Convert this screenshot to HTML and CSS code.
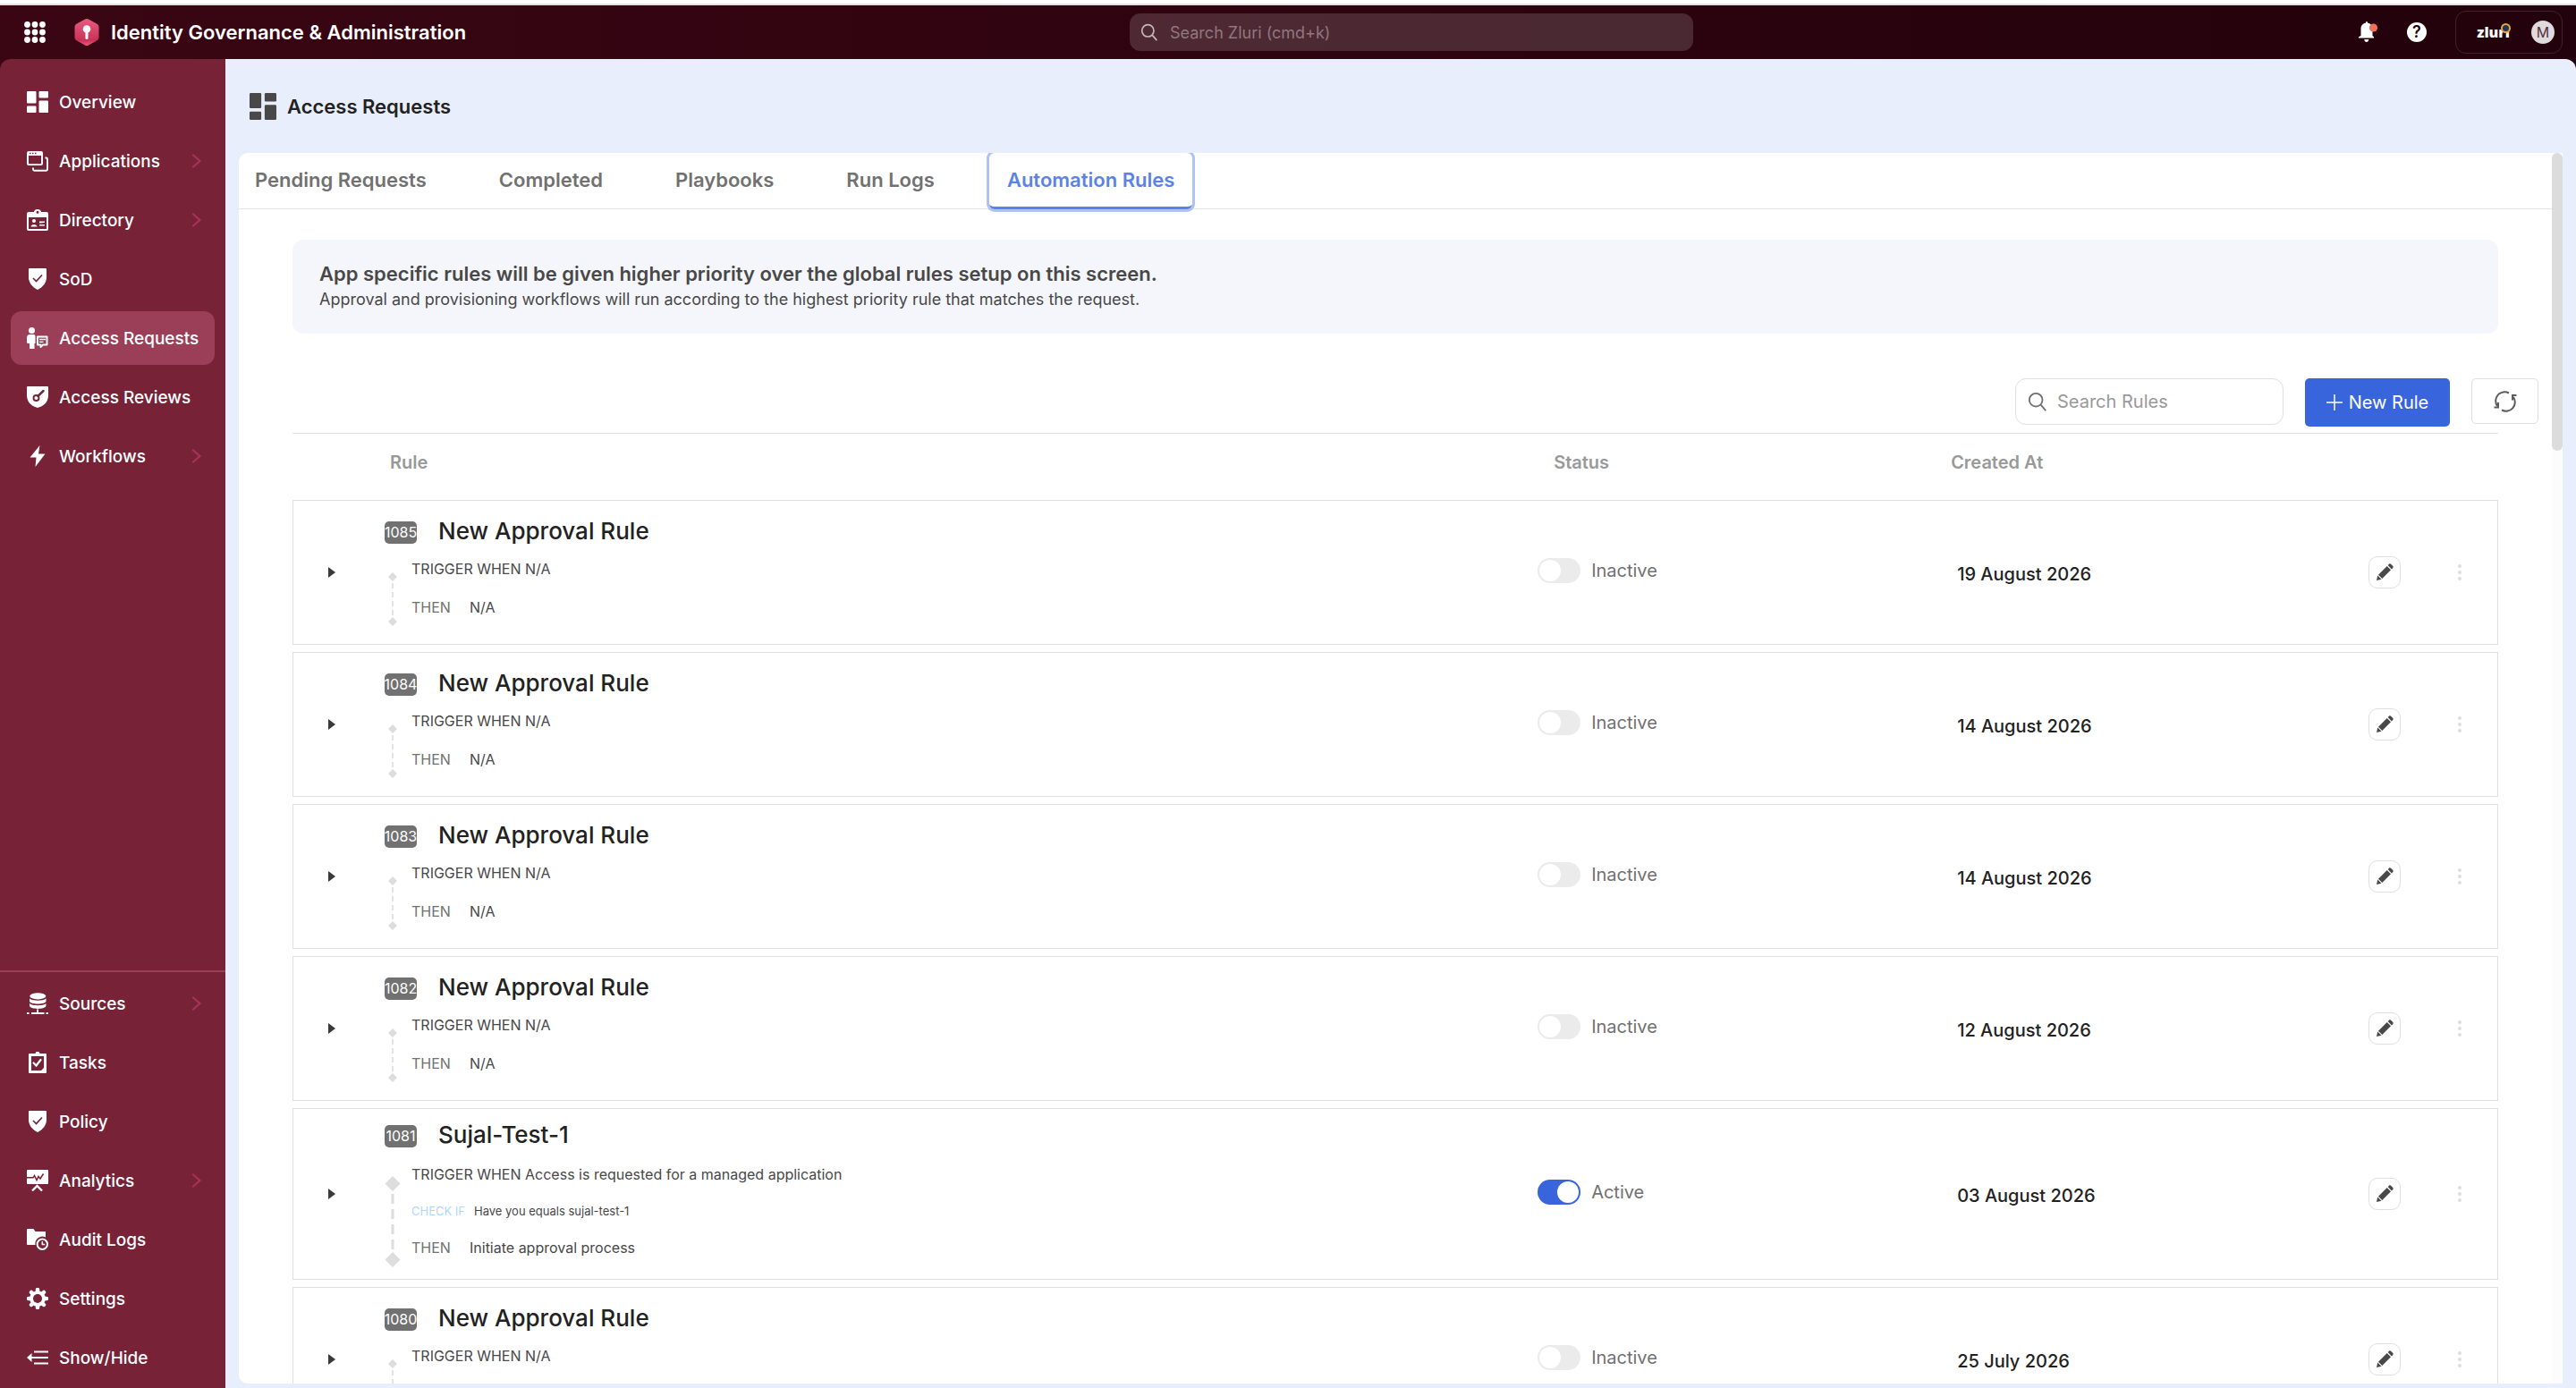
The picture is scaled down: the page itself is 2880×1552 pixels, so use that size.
FILE: index.html
```html
<!DOCTYPE html>
<html lang="en">

<head>
    <meta charset="UTF-8">
    <meta name="viewport" content="width=device-width, initial-scale=1.0">
    <title>Access Requests</title>
    <link rel="stylesheet" href="styles.css">
</head>

<body>
    <!-- Shared icons -->
    <svg class="sprite" aria-hidden="true">
        <symbol id="i-dashboard" viewBox="0 0 24 24">
            <rect x="0" y="0" width="10.5" height="13.5" rx="1" />
            <rect x="0" y="16.500" width="10.500" height="7.500" rx="1" />
            <rect x="13.500" y="0" width="10.500" height="7.500" rx="1" />
            <rect x="13.500" y="10.500" width="10.500" height="13.500" rx="1" />
        </symbol>
        <symbol id="i-apps" viewBox="0 0 24 24">
            <path fill-rule="evenodd" d="M2 1h14a2 2 0 0 1 2 2v12a2 2 0 0 1-2 2H2a2 2 0 0 1-2-2V3a2 2 0 0 1 2-2zm0 5v8.500a.8.800 0 0 0 .8.800h12.400a.8.800 0 0 0 .8-.8V6z" />
            <path d="M3 3.500h1.500M6 3.500h1.500M9 3.500h1.500" stroke="#772237" stroke-width="1.300" />
            <path d="M20.500 8.500h1a1.500 1.500 0 0 1 1.500 1.500v11a1.800 1.800 0 0 1-1.800 1.800H8.500A1.500 1.500 0 0 1 7 21.300V19.500" fill="none" stroke="currentColor" stroke-width="1.900" />
        </symbol>
        <symbol id="i-directory" viewBox="0 0 24 24">
            <path fill-rule="evenodd" d="M2 3h6V2.500A3.500 3.500 0 0 1 11.500 0h1A3.500 3.500 0 0 1 16 2.500V3h6a2 2 0 0 1 2 2v17a2 2 0 0 1-2 2H2a2 2 0 0 1-2-2V5a2 2 0 0 1 2-2zm0 6v13h20V9zM12 1.800a1.500 1.500 0 1 0 0 3 1.500 1.500 0 0 0 0-3z" />
            <circle cx="8" cy="13" r="2" />
            <path d="M4.500 19.500c0-3.500 7-3.500 7 0zM14 13.500h6v1.500l-6 .5zM14 17h6v1.500h-6z" />
        </symbol>
        <symbol id="i-shield" viewBox="0 0 24 24">
            <path d="M3 0h18a1 1 0 0 1 1 1v9c0 6-4 11-10 14C6 21 2 16 2 10V1a1 1 0 0 1 1-1z" />
            <path d="M7 11l3.500 3.500 6.500-7" fill="none" stroke="#772237" stroke-width="1.700" />
        </symbol>
        <symbol id="i-request" viewBox="0 0 24 24">
            <circle cx="5.500" cy="3.500" r="3.500" />
            <path d="M3.500 8h4C9 8 9.500 9 9.500 10.500V18H8.500v6H3v-6H1.500A1.500 1.500 0 0 1 0 16.500V12c0-2.500 1-4 3.500-4z" />
            <path d="M12 10.500h10.500v9H18l-2.500 2.500v-2.500H12z" fill="none" stroke="currentColor" stroke-width="2" stroke-linejoin="round" />
            <path d="M14 13.500h7M14 16.300h4.500" stroke="currentColor" stroke-width="1.300" />
        </symbol>
        <symbol id="i-review" viewBox="0 0 24 24">
            <path d="M1 0h22a1 1 0 0 1 1 1v9c0 7-4.500 12-12 14C4.500 22 0 17 0 10V1a1 1 0 0 1 1-1z" />
            <circle cx="10.500" cy="13" r="3" fill="none" stroke="#772237" stroke-width="1.900" />
            <path d="M12.500 10.800L18.500 5" stroke="#772237" stroke-width="2.500" stroke-linecap="round" />
        </symbol>
        <symbol id="i-bolt" viewBox="0 0 24 24">
            <path d="M14.500 0L3.500 13.500h7L9.500 24 20.500 9.500h-7.500z" />
        </symbol>
        <symbol id="i-sources" viewBox="0 0 24 24">
            <ellipse cx="12.300" cy="3.800" rx="9" ry="3.600" />
            <path d="M3 6.500c3 3 15.500 3 18.500 0v3c0 4-18.500 4-18.500 0zM3 12c3 3 15.500 3 18.500 0v2.500c0 4.500-18.500 4.500-18.500 0z" />
            <path d="M11.200 18.500h1.800V22h-1.800zM5 22h14.500v2H5zM0 22h2.500v2H0zM21.500 22H24v2h-2.500z" />
        </symbol>
        <symbol id="i-tasks" viewBox="0 0 24 24">
            <path fill-rule="evenodd" d="M3 2h6.500l1-2h3l1 2H21a1 1 0 0 1 1 1v20a1 1 0 0 1-1 1H3a1 1 0 0 1-1-1V3a1 1 0 0 1 1-1zm2 3v16h11l3-3V5z" />
            <path d="M7.500 12.500l3 3 5-6.500" fill="none" stroke="currentColor" stroke-width="2.200" stroke-linecap="round" />
        </symbol>
        <symbol id="i-analytics" viewBox="0 0 24 24">
            <path d="M1 0h22a1 1 0 0 1 1 1v14a1 1 0 0 1-1 1H1a1 1 0 0 1-1-1V1a1 1 0 0 1 1-1z" />
            <path d="M0 8.800h7l1.500-2.300L11 11.500l2-4 2 2.500 3.500-5.500" fill="none" stroke="#772237" stroke-width="1.500" />
            <path d="M6 23.500l5.500-5.500 5.500 5.500" fill="none" stroke="currentColor" stroke-width="2.300" />
        </symbol>
        <symbol id="i-audit" viewBox="0 0 24 24">
            <path d="M1 0h6.500L9.500 3H21v6.500A8 8 0 0 0 9.500 18H1a1 1 0 0 1-1-1V1a1 1 0 0 1 1-1z" />
            <circle cx="17.300" cy="17.300" r="5.700" fill="none" stroke="currentColor" stroke-width="2" />
            <path d="M17.300 14v3.500h3" fill="none" stroke="currentColor" stroke-width="1.500" />
        </symbol>
        <symbol id="i-settings" viewBox="0 0 24 24">
            <path d="M12 2v20M2 12h20M5 5l14 14M5 19L19 5" stroke="currentColor" stroke-width="4.500" stroke-linecap="round" />
            <circle cx="12" cy="12" r="8.800" />
            <circle cx="12" cy="12" r="5" fill="#772237" />
        </symbol>
        <symbol id="i-toggle" viewBox="0 0 24 24">
            <path d="M0 12l5.500-5v10zM5 11h19v2H5zM8 4.500h16v2H8zM8 17.500h16v2H8z" />
        </symbol>
        <symbol id="i-chevron" viewBox="0 0 12 18">
            <path d="M2 2.500L9.500 9 2 15.500" fill="none" stroke="currentColor" stroke-width="2.200" stroke-linecap="round" />
        </symbol>
        <symbol id="i-search" viewBox="0 0 24 24">
            <circle cx="10" cy="10" r="8" fill="none" stroke="currentColor" stroke-width="2" />
            <path d="M16 16l6 7" stroke="currentColor" stroke-width="2" />
        </symbol>
        <symbol id="i-edit" viewBox="0 0 20 20">
            <path d="M1 19l1.200-5.500 4.300 4.300zM3 12.700L12.700 3l4.300 4.300L7.300 17zM13.600 2.100l1.200-1.200c.8-.8 1.800-.6 2.500 0l1.800 1.800c.7.700.7 1.800 0 2.500l-1.200 1.200z" />
        </symbol>
        <symbol id="i-flow" viewBox="0 0 10 60">
            <path d="M5 0l5 5-5 5-5-5zM5 50l5 5-5 5-5-5z" />
            <path d="M5 12v37" stroke="currentColor" stroke-width="1.700" stroke-dasharray="6 4" />
        </symbol>
        <symbol id="i-flow-long" viewBox="0 0 18 102">
            <path d="M9 0l8.500 8.500L9 17 .5 8.500zM9 85l8.500 8.500L9 102 .5 93.500z" />
            <path d="M9 20v62" stroke="currentColor" stroke-width="3" stroke-dasharray="11 6" />
        </symbol>
    </svg>

    <div class="app">
        <header class="topbar">
            <div class="brand">
                <button class="icon-btn" type="button" aria-label="Switch product">
                    <svg class="icon" viewBox="0 0 24 24">
                        <path d="M3.500 3.500h0M12 3.500h0M20.500 3.500h0M3.500 12h0M12 12h0M20.500 12h0M3.500 20.500h0M12 20.500h0M20.500 20.500h0" stroke="currentColor" stroke-width="6.800" stroke-linecap="round" />
                    </svg>
                </button>
                <svg class="brand-logo" viewBox="0 0 28 30">
                    <defs>
                        <linearGradient id="hex" x2="0" y2="1">
                            <stop offset="0" stop-color="#ea5a80" />
                            <stop offset=".8" stop-color="#c93257" />
                            <stop offset="1" stop-color="#ea5a80" />
                        </linearGradient>
                    </defs>
                    <path d="M12 .6a4 4 0 0 1 4 0l9.500 5.200A4 4 0 0 1 27.500 9v12a4 4 0 0 1-2 3.300L16 29.400a4 4 0 0 1-4 0l-9.500-5.100A4 4 0 0 1 .5 21V9a4 4 0 0 1 2-3.200z" fill="url(#hex)" />
                    <circle cx="14" cy="11.500" r="4.300" />
                    <path d="M14 12v9.500" stroke="#fff" stroke-width="3" stroke-linecap="round" />
                </svg>
                <span class="brand-name">Identity Governance &amp; Administration</span>
            </div>

            <label class="global-search">
                <svg class="search-icon"><use href="#i-search" /></svg>
                <input type="search" placeholder="Search Zluri (cmd+k)" aria-label="Search Zluri">
            </label>

            <div class="top-actions">
                <button class="icon-btn" type="button" aria-label="Notifications">
                    <svg class="icon" viewBox="0 0 24 24">
                        <path d="M10 1.500c0-2 2-2 2 0 4 .8 5.500 3.500 5.500 7V16l1.500 1.300V18.500H2V17.300L4.500 16V8.500c0-3.500 1.500-6.200 5.500-7zM8.300 20h5c0 4-5 4-5 0z" />
                        <circle cx="18.500" cy="7" r="4.600" fill="#ee715c" />
                    </svg>
                </button>
                <button class="icon-btn help-btn" type="button" aria-label="Help">?</button>
                <button class="profile" type="button">
                    <span class="wordmark">zluri</span>
                    <span class="avatar">M</span>
                </button>
            </div>
        </header>

        <div class="layout">
            <aside class="sidebar">
                <nav class="nav">
                    <a class="nav-item" href="#"><svg class="icon"><use href="#i-dashboard" /></svg>Overview</a>
                    <a class="nav-item" href="#"><svg class="icon"><use href="#i-apps" /></svg>Applications<svg class="chevron"><use href="#i-chevron" /></svg></a>
                    <a class="nav-item" href="#"><svg class="icon"><use href="#i-directory" /></svg>Directory<svg class="chevron"><use href="#i-chevron" /></svg></a>
                    <a class="nav-item" href="#"><svg class="icon"><use href="#i-shield" /></svg>SoD</a>
                    <a class="nav-item active" href="#"><svg class="icon"><use href="#i-request" /></svg>Access Requests</a>
                    <a class="nav-item" href="#"><svg class="icon"><use href="#i-review" /></svg>Access Reviews</a>
                    <a class="nav-item" href="#"><svg class="icon"><use href="#i-bolt" /></svg>Workflows<svg class="chevron"><use href="#i-chevron" /></svg></a>
                </nav>
                <nav class="nav nav-bottom">
                    <a class="nav-item" href="#"><svg class="icon"><use href="#i-sources" /></svg>Sources<svg class="chevron"><use href="#i-chevron" /></svg></a>
                    <a class="nav-item" href="#"><svg class="icon"><use href="#i-tasks" /></svg>Tasks</a>
                    <a class="nav-item" href="#"><svg class="icon"><use href="#i-shield" /></svg>Policy</a>
                    <a class="nav-item" href="#"><svg class="icon"><use href="#i-analytics" /></svg>Analytics<svg class="chevron"><use href="#i-chevron" /></svg></a>
                    <a class="nav-item" href="#"><svg class="icon"><use href="#i-audit" /></svg>Audit Logs</a>
                    <a class="nav-item" href="#"><svg class="icon"><use href="#i-settings" /></svg>Settings</a>
                    <a class="nav-item" href="#"><svg class="icon"><use href="#i-toggle" /></svg>Show/Hide</a>
                </nav>
            </aside>

            <main class="main">
                <div class="page-header">
                    <svg class="page-icon"><use href="#i-dashboard" /></svg>
                    <h1>Access Requests</h1>
                </div>

                <section class="panel">
                    <div class="panel-body">
                        <nav class="tabs">
                            <a class="tab" href="#">Pending Requests</a>
                            <a class="tab" href="#">Completed</a>
                            <a class="tab" href="#">Playbooks</a>
                            <a class="tab" href="#">Run Logs</a>
                            <a class="tab active" href="#">Automation Rules</a>
                        </nav>

                        <div class="banner">
                            <h2>App specific rules will be given higher priority over the global rules setup on this screen.</h2>
                            <p>Approval and provisioning workflows will run according to the highest priority rule that matches the request.</p>
                        </div>

                        <div class="toolbar">
                            <label class="rule-search">
                                <svg class="search-icon"><use href="#i-search" /></svg>
                                <input type="search" placeholder="Search Rules" aria-label="Search Rules">
                            </label>
                            <button class="new-rule" type="button">
                                <svg class="plus" viewBox="0 0 18 18"><path d="M9 0v18M0 9h18" stroke="currentColor" stroke-width="1.500" /></svg>
                                New Rule
                            </button>
                            <button class="refresh" type="button" aria-label="Refresh">
                                <svg class="refresh-icon" viewBox="0 0 28 26">
                                    <path d="M18 3.500A10 10 0 0 0 5 18M10 22.500A10 10 0 0 0 23 8" />
                                    <path d="M1.500 19.500H6V14M26.500 6H22v5.500" />
                                </svg>
                            </button>
                        </div>

                        <div class="rules">
                            <table class="rules-table">
                                <thead>
                                    <tr>
                                        <th class="col-expand"></th>
                                        <th class="col-rule">Rule</th>
                                        <th class="col-status">Status</th>
                                        <th class="col-created">Created At</th>
                                        <th class="col-actions"></th>
                                    </tr>
                                </thead>
                                <tbody>
                                    <tr>
                                        <td><button class="expand" type="button" aria-label="Expand rule 1085"></button></td>
                                        <td>
                                            <div class="rule-head"><span class="rule-id">1085</span><span class="rule-name">New Approval Rule</span></div>
                                            <div class="rule-flow">
                                                <svg class="flow"><use href="#i-flow" /></svg>
                                                <div class="steps">
                                                    <p>TRIGGER WHEN N/A</p>
                                                    <p><span class="then">THEN</span>N/A</p>
                                                </div>
                                            </div>
                                        </td>
                                        <td><label class="status"><input type="checkbox" class="switch">Inactive</label></td>
                                        <td class="date">19 August 2026</td>
                                        <td>
                                            <div class="actions">
                                                <button class="edit" type="button" aria-label="Edit"><svg class="edit-icon"><use href="#i-edit" /></svg></button>
                                                <button class="more" type="button" aria-label="More"></button>
                                            </div>
                                        </td>
                                    </tr>
                                    <tr>
                                        <td><button class="expand" type="button" aria-label="Expand rule 1084"></button></td>
                                        <td>
                                            <div class="rule-head"><span class="rule-id">1084</span><span class="rule-name">New Approval Rule</span></div>
                                            <div class="rule-flow">
                                                <svg class="flow"><use href="#i-flow" /></svg>
                                                <div class="steps">
                                                    <p>TRIGGER WHEN N/A</p>
                                                    <p><span class="then">THEN</span>N/A</p>
                                                </div>
                                            </div>
                                        </td>
                                        <td><label class="status"><input type="checkbox" class="switch">Inactive</label></td>
                                        <td class="date">14 August 2026</td>
                                        <td>
                                            <div class="actions">
                                                <button class="edit" type="button" aria-label="Edit"><svg class="edit-icon"><use href="#i-edit" /></svg></button>
                                                <button class="more" type="button" aria-label="More"></button>
                                            </div>
                                        </td>
                                    </tr>
                                    <tr>
                                        <td><button class="expand" type="button" aria-label="Expand rule 1083"></button></td>
                                        <td>
                                            <div class="rule-head"><span class="rule-id">1083</span><span class="rule-name">New Approval Rule</span></div>
                                            <div class="rule-flow">
                                                <svg class="flow"><use href="#i-flow" /></svg>
                                                <div class="steps">
                                                    <p>TRIGGER WHEN N/A</p>
                                                    <p><span class="then">THEN</span>N/A</p>
                                                </div>
                                            </div>
                                        </td>
                                        <td><label class="status"><input type="checkbox" class="switch">Inactive</label></td>
                                        <td class="date">14 August 2026</td>
                                        <td>
                                            <div class="actions">
                                                <button class="edit" type="button" aria-label="Edit"><svg class="edit-icon"><use href="#i-edit" /></svg></button>
                                                <button class="more" type="button" aria-label="More"></button>
                                            </div>
                                        </td>
                                    </tr>
                                    <tr>
                                        <td><button class="expand" type="button" aria-label="Expand rule 1082"></button></td>
                                        <td>
                                            <div class="rule-head"><span class="rule-id">1082</span><span class="rule-name">New Approval Rule</span></div>
                                            <div class="rule-flow">
                                                <svg class="flow"><use href="#i-flow" /></svg>
                                                <div class="steps">
                                                    <p>TRIGGER WHEN N/A</p>
                                                    <p><span class="then">THEN</span>N/A</p>
                                                </div>
                                            </div>
                                        </td>
                                        <td><label class="status"><input type="checkbox" class="switch">Inactive</label></td>
                                        <td class="date">12 August 2026</td>
                                        <td>
                                            <div class="actions">
                                                <button class="edit" type="button" aria-label="Edit"><svg class="edit-icon"><use href="#i-edit" /></svg></button>
                                                <button class="more" type="button" aria-label="More"></button>
                                            </div>
                                        </td>
                                    </tr>
                                    <tr class="has-condition">
                                        <td><button class="expand" type="button" aria-label="Expand rule 1081"></button></td>
                                        <td>
                                            <div class="rule-head"><span class="rule-id">1081</span><span class="rule-name">Sujal-Test-1</span></div>
                                            <div class="rule-flow">
                                                <svg class="flow"><use href="#i-flow-long" /></svg>
                                                <div class="steps">
                                                    <p>TRIGGER WHEN Access is requested for a managed application</p>
                                                    <p class="condition"><span class="check-if">CHECK IF</span>Have you equals sujal-test-1</p>
                                                    <p><span class="then">THEN</span>Initiate approval process</p>
                                                </div>
                                            </div>
                                        </td>
                                        <td><label class="status"><input type="checkbox" class="switch" checked>Active</label></td>
                                        <td class="date">03 August 2026</td>
                                        <td>
                                            <div class="actions">
                                                <button class="edit" type="button" aria-label="Edit"><svg class="edit-icon"><use href="#i-edit" /></svg></button>
                                                <button class="more" type="button" aria-label="More"></button>
                                            </div>
                                        </td>
                                    </tr>
                                    <tr>
                                        <td><button class="expand" type="button" aria-label="Expand rule 1080"></button></td>
                                        <td>
                                            <div class="rule-head"><span class="rule-id">1080</span><span class="rule-name">New Approval Rule</span></div>
                                            <div class="rule-flow">
                                                <svg class="flow"><use href="#i-flow" /></svg>
                                                <div class="steps">
                                                    <p>TRIGGER WHEN N/A</p>
                                                </div>
                                            </div>
                                        </td>
                                        <td><label class="status"><input type="checkbox" class="switch">Inactive</label></td>
                                        <td class="date">25 July 2026</td>
                                        <td>
                                            <div class="actions">
                                                <button class="edit" type="button" aria-label="Edit"><svg class="edit-icon"><use href="#i-edit" /></svg></button>
                                                <button class="more" type="button" aria-label="More"></button>
                                            </div>
                                        </td>
                                    </tr>
                                </tbody>
                            </table>
                        </div>
                    </div>
                    <div class="scroll-track">
                        <div class="scroll-thumb"></div>
                    </div>
                </section>
            </main>
        </div>
    </div>
</body>

</html>
```

FILE: styles.css
```css
* {
    box-sizing: border-box;
}

body {
    margin: 0;
    padding-top: 4px;
    height: 100vh;
    background: #fff;
    color: #222;
    font-family: Inter, "Liberation Sans", sans-serif;
    font-size: 20px;
    overflow: hidden;
}

h1,
h2,
p {
    margin: 0;
}

a {
    color: inherit;
    text-decoration: none;
}

button,
input {
    font: inherit;
    color: inherit;
}

button {
    padding: 0;
    border: none;
    background: none;
    cursor: pointer;
}

svg {
    display: block;
    flex: none;
    fill: currentColor;
}

.sprite {
    display: none;
}

.app {
    display: flex;
    flex-direction: column;
    height: 100%;
    border-top: 2px solid #e2e0e0;
    background: linear-gradient(90deg, #3a0613, #22020c);
}

.icon {
    width: 24px;
    height: 24px;
}

/* Top bar */
.topbar {
    display: flex;
    align-items: center;
    justify-content: space-between;
    height: 60px;
    flex: none;
    padding: 0 15px 0 27px;
    color: #fff;
}

.brand {
    display: flex;
    align-items: center;
}

.brand-logo {
    width: 28px;
    height: 30px;
    margin: 0 13px 0 32px;
}

.brand-name {
    font-size: 22px;
    font-weight: 600;
    line-height: 28px;
}

.global-search {
    display: flex;
    align-items: center;
    width: 630px;
    height: 42px;
    padding: 0 12px;
    gap: 13px;
    border-radius: 12px;
    background: rgba(255, 255, 255, 0.15);
}

.search-icon {
    width: 20px;
    height: 20px;
    color: #c4b7bc;
}

.global-search input,
.rule-search input {
    flex: 1;
    min-width: 0;
    padding: 0;
    border: none;
    outline: none;
    background: transparent;
}

.global-search input {
    font-size: 18px;
}

.global-search input::placeholder {
    color: #907780;
}

.top-actions {
    display: flex;
    align-items: center;
    gap: 32px;
}

.help-btn {
    width: 22px;
    height: 22px;
    border-radius: 50%;
    background: #fff;
    color: #22020c;
    font-size: 18px;
    font-weight: 600;
    line-height: 22px;
}

.profile {
    display: flex;
    align-items: center;
    justify-content: flex-end;
    gap: 24px;
    width: 120px;
    height: 48px;
    padding-right: 8px;
    border: 1px solid #40232c;
    border-radius: 12px;
}

.wordmark {
    position: relative;
    font-family: "Open Sans", sans-serif;
    font-size: 16px;
    font-weight: 800;
    line-height: 24px;
}

/* Ring over the last letter of the wordmark */
.wordmark::after {
    content: "";
    position: absolute;
    top: 2px;
    right: -1px;
    width: 7px;
    height: 7px;
    border: 2px solid #e3a53c;
    border-radius: 50%;
    background: #22355c;
}

.avatar {
    width: 26px;
    height: 26px;
    border-radius: 50%;
    background: #dfdadd;
    color: #55323e;
    font-size: 16px;
    line-height: 26px;
    text-align: center;
}

/* Sidebar */
.layout {
    display: flex;
    flex: 1;
    min-height: 0;
}

.sidebar {
    display: flex;
    flex-direction: column;
    justify-content: space-between;
    width: 252px;
    flex: none;
    border-top-left-radius: 12px;
    background: #772237;
    color: #fff;
}

.nav {
    display: flex;
    flex-direction: column;
    gap: 6px;
    padding: 18px 12px 0;
}

.nav-bottom {
    padding: 5px 12px 4px;
    border-top: 2px solid #9b3f59;
}

.nav-item {
    display: flex;
    align-items: center;
    gap: 12px;
    height: 60px;
    padding: 0 14px 0 18px;
    border-radius: 12px;
    font-size: 19px;
    font-weight: 500;
    white-space: nowrap;
}

.nav-item.active {
    background: #9b3f59;
}

.chevron {
    width: 12px;
    height: 18px;
    margin-left: auto;
    color: #a83358;
}

/* Main area */
.main {
    display: flex;
    flex-direction: column;
    flex: 1;
    min-width: 0;
    padding: 0 15px 5px;
    border-top-right-radius: 12px;
    background: #e8eefb;
}

.page-header {
    display: flex;
    align-items: center;
    gap: 12px;
    height: 105px;
    flex: none;
    padding-left: 12px;
}

.page-header h1 {
    font-size: 22px;
    font-weight: 600;
    line-height: 28px;
}

.page-icon {
    width: 30px;
    height: 30px;
    color: #484848;
}

.panel {
    display: flex;
    flex: 1;
    min-height: 0;
    border-radius: 10px 0 0 10px;
    background: #fff;
    overflow: hidden;
}

.panel-body {
    flex: 1;
    min-width: 0;
    overflow: auto;
    scrollbar-width: none;
}

.scroll-track {
    width: 12px;
    background: #fcfcfc;
}

.scroll-thumb {
    height: 333px;
    border-radius: 6px;
    background: #dcdcdc;
}

/* Tabs */
.tabs {
    display: flex;
    gap: 41px;
    height: 63px;
    border-bottom: 1px solid #e5e5e5;
}

.tab {
    height: 63px;
    padding: 0 20px;
    border-bottom: 3px solid transparent;
    color: #717171;
    font-size: 22px;
    font-weight: 600;
    line-height: 60px;
}

.tab:first-child {
    padding-left: 18px;
}

.tab.active {
    border-color: #5a83e3;
    border-radius: 6px;
    box-shadow: 0 0 0 3px #afc3f3;
    color: #5a83e3;
}

/* Info banner */
.banner {
    margin: 34px 60px 0;
    padding: 24px 30px;
    border-radius: 12px;
    background: #f5f6fb;
    color: #484848;
}

.banner h2 {
    font-size: 22px;
    font-weight: 600;
    line-height: 28px;
}

.banner p {
    font-size: 18px;
    line-height: 29px;
}

/* Toolbar */
.toolbar {
    display: flex;
    justify-content: flex-end;
    gap: 24px;
    margin: 50px 15px 7px 60px;
}

.rule-search {
    display: flex;
    align-items: center;
    gap: 11px;
    width: 300px;
    height: 52px;
    padding: 0 13px;
    border: 1px solid #dfdfdf;
    border-radius: 12px;
}

.rule-search .search-icon {
    width: 22px;
    height: 24px;
    color: #717171;
}

.rule-search input::placeholder {
    color: #999;
}

.new-rule {
    display: flex;
    align-items: center;
    justify-content: center;
    gap: 7px;
    width: 162px;
    height: 54px;
    border-radius: 5px;
    background: #3865db;
    color: #fff;
}

.plus {
    width: 18px;
    height: 18px;
}

.refresh {
    display: flex;
    align-items: center;
    justify-content: center;
    width: 75px;
    height: 51px;
    border: 1px solid #dfdfdf;
    border-radius: 5px;
}

.refresh-icon {
    width: 28px;
    height: 26px;
    fill: none;
    stroke: #5c5c5c;
    stroke-width: 2;
}

/* Rules table */
.rules {
    margin: 0 60px;
    border-top: 1px solid #dee2e6;
}

.rules-table {
    width: 100%;
    table-layout: fixed;
    border-collapse: separate;
    border-spacing: 0 8px;
}

th {
    height: 58px;
    padding: 12px 0 0 6px;
    color: #999;
    font-weight: 600;
    line-height: 24px;
    text-align: left;
    vertical-align: top;
}

.col-expand {
    width: 103px;
}

.col-status {
    width: 462px;
    padding-left: 18px;
}

.col-created {
    width: 18%;
    padding-left: 0;
}

.col-actions {
    width: 168px;
}

td {
    height: 162px;
    padding: 0;
    border: 1px solid #dedfe2;
    border-width: 1px 0;
}

td:first-child {
    border-left-width: 1px;
}

td:last-child {
    border-right-width: 1px;
}

.has-condition td {
    height: 192px;
}

.expand {
    display: block;
    margin-left: 39px;
    border-left: 8px solid #3a3a3a;
    border-top: 6px solid transparent;
    border-bottom: 6px solid transparent;
}

.rule-head {
    display: flex;
    align-items: center;
    gap: 24px;
    height: 30px;
}

.rule-id {
    display: flex;
    justify-content: center;
    width: 36px;
    height: 25px;
    margin-top: 4px;
    border-radius: 5px;
    background: #717171;
    color: #fff;
    font-size: 16px;
    line-height: 25px;
    overflow: hidden;
}

.rule-name {
    font-size: 26px;
    font-weight: 500;
    line-height: 30px;
}

.rule-flow {
    display: flex;
    gap: 12px;
    margin-top: 17px;
}

.flow {
    width: 18px;
    height: 60px;
    margin: 14px 0 2px;
    color: #ddd;
}

.steps {
    color: #484848;
    font-size: 16px;
    line-height: 20px;
}

.steps p + p {
    margin-top: 23px;
}

.then {
    display: inline-block;
    width: 65px;
    color: #717171;
}

.has-condition .flow {
    height: 102px;
    margin: 12px 0 0;
}

.has-condition .rule-flow {
    margin-top: 19px;
}

.has-condition .steps p + p {
    margin-top: 21px;
}

.condition {
    font-size: 13px;
}

.check-if {
    display: inline-block;
    width: 70px;
    color: #afd6ff;
}

.status {
    display: flex;
    align-items: center;
    gap: 12px;
    padding-bottom: 5px;
    color: #717171;
}

.switch {
    appearance: none;
    width: 48px;
    height: 28px;
    margin: 0;
    padding: 2px;
    border-radius: 14px;
    background: #ebebeb;
    cursor: pointer;
}

.switch::before {
    content: "";
    display: block;
    width: 24px;
    height: 24px;
    border-radius: 50%;
    background: #fff;
}

.switch:checked {
    background: #3865db;
}

.switch:checked::before {
    margin-left: auto;
}

.date {
    padding: 3px 0 0 7px;
    font-weight: 500;
}

.actions {
    display: flex;
    align-items: center;
    justify-content: flex-end;
    gap: 64px;
    padding-right: 40px;
}

.edit {
    display: flex;
    align-items: center;
    justify-content: center;
    width: 36px;
    height: 36px;
    border: 1px solid #dfdfdf;
    border-radius: 10px;
}

.edit-icon {
    width: 20px;
    height: 20px;
    color: #484848;
}

/* Three dots, drawn from one dot and its shadows */
.more {
    width: 4px;
    height: 4px;
    border-radius: 50%;
    background: #ddd;
    box-shadow: 0 -7px #ddd, 0 7px #ddd;
}
```
